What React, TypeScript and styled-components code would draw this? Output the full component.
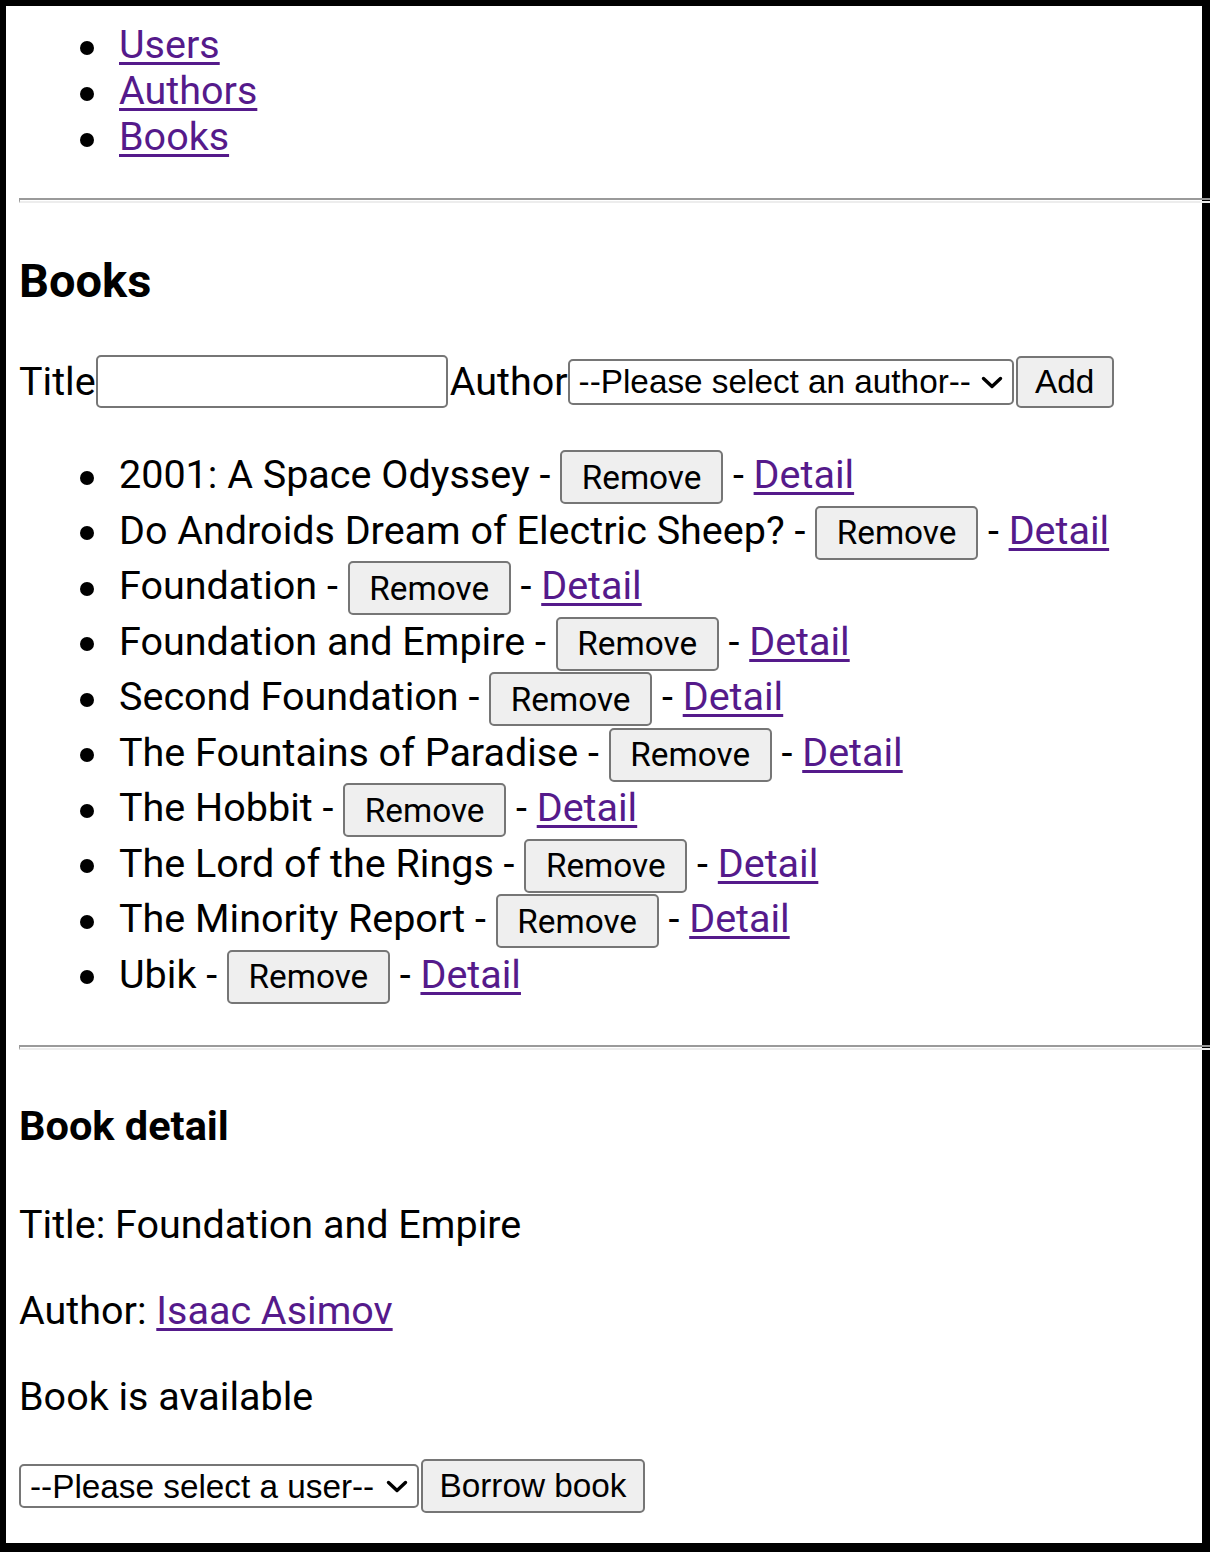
import React from 'react';
import styled, { createGlobalStyle } from 'styled-components';

// global
const GlobalStyle = createGlobalStyle`
  html, body {
    margin: 0;
    padding: 0;
    background: #000;
    overflow: hidden;
  }
  body {
    font-family: Roboto, "Liberation Sans", Arial, sans-serif;
    color: #000;
  }
`;

// styles
const Frame = styled.div`
  box-sizing: border-box;
  height: 1537px;
  margin: 6px 8px 0 6px;
  padding: 16px 0 0 13px;
  background: #fff;
  font-size: 39.5px;
`;

const List = styled.ul<{ $top: number; $line: number }>`
  margin: ${(p) => p.$top}px 0 0;
  padding-left: 100px;
  list-style: none;
  line-height: ${(p) => p.$line}px;

  & > li::before {
    content: "";
    display: inline-block;
    width: 14px;
    height: 14px;
    margin: 0 25px 0 -39px;
    border-radius: 50%;
    background: #000;
    vertical-align: middle;
  }
`;

const Link = styled.a`
  color: #551a8b;
  text-decoration: underline;
  text-underline-offset: 4px;
  text-decoration-thickness: 3px;
  cursor: pointer;
`;

const Rule = styled.hr<{ $top: number }>`
  height: 1px;
  margin: ${(p) => p.$top}px -20px 0 0;
  border: none;
  border-top: 2px solid #9a9a9a;
  border-left: 1px solid #9a9a9a;
  border-bottom: 2px solid #ededed;
`;

const PageTitle = styled.h2`
  margin: 50px 0 0;
  font-size: 47px;
  font-weight: 700;
  line-height: 55px;
`;

const FormRow = styled.div`
  display: flex;
  align-items: center;
  height: 53px;
  margin-top: 47px;
`;

const Label = styled.span`
  line-height: 46px;
`;

const TextInput = styled.input`
  box-sizing: border-box;
  width: 352px;
  height: 53px;
  margin: 0 2px 0 0;
  border: 2px solid #767676;
  border-radius: 5px;
  background: #fff;
  font-size: 33px;
`;

const SelectWrap = styled.span`
  position: relative;
  display: inline-flex;
  align-items: center;
`;

const Select = styled.select<{ $w: number; $h: number }>`
  appearance: none;
  box-sizing: border-box;
  width: ${(p) => p.$w}px;
  height: ${(p) => p.$h}px;
  margin: 0;
  padding: 0 40px 0 9px;
  border: 2px solid #767676;
  border-radius: 5px;
  background: #fff;
  color: #000;
  font-family: "Liberation Sans", Arial, sans-serif;
  font-size: 33.3px;
`;

const Chevron = styled.svg`
  position: absolute;
  right: 11px;
  top: 50%;
  margin-top: -6px;
  pointer-events: none;
`;

const Button = styled.button<{ $w: number; $h: number; $sans?: boolean }>`
  box-sizing: border-box;
  width: ${(p) => p.$w}px;
  height: ${(p) => p.$h}px;
  margin: 0 0 0 2px;
  padding: 0;
  border: 2px solid #767676;
  border-radius: 5px;
  background: #efefef;
  color: #000;
  font-family: ${(p) => (p.$sans ? '"Liberation Sans", Arial, sans-serif' : 'Roboto, sans-serif')};
  font-size: 33.3px;
  line-height: normal;
`;

const RemoveButton = styled(Button)`
  margin: 1px 0 0.5px;
  vertical-align: top;
`;

const DetailTitle = styled.h3`
  margin: 51px 0 0;
  font-size: 41.5px;
  font-weight: 700;
  line-height: 49px;
`;

const Para = styled.p<{ $top: number }>`
  margin: ${(p) => p.$top}px 0 0;
  line-height: 46px;
`;

const BorrowRow = styled.div`
  display: flex;
  align-items: center;
  margin-top: 39px;
`;

const books = [
  '2001: A Space Odyssey',
  'Do Androids Dream of Electric Sheep?',
  'Foundation',
  'Foundation and Empire',
  'Second Foundation',
  'The Fountains of Paradise',
  'The Hobbit',
  'The Lord of the Rings',
  'The Minority Report',
  'Ubik',
];

const ChevronIcon: React.FC = () => (
  <Chevron width="22" height="13" viewBox="0 0 22 13">
    <polyline points="2.5,2.5 11,10.5 19.5,2.5" fill="none" stroke="#000" strokeWidth="3.4" strokeLinecap="round" strokeLinejoin="round" />
  </Chevron>
);

const App: React.FC = () => {
  return (
    <>
      <GlobalStyle />
      <Frame>
        <List $top={0} $line={46}>
          <li><Link>Users</Link></li>
          <li><Link>Authors</Link></li>
          <li><Link>Books</Link></li>
        </List>

        <Rule $top={38} />

        <PageTitle>Books</PageTitle>
        <FormRow>
          <Label>Title</Label>
          <TextInput type="text" />
          <Label>Author</Label>
          <SelectWrap>
            <Select $w={446} $h={46} defaultValue="">
              <option value="">--Please select an author--</option>
            </Select>
            <ChevronIcon />
          </SelectWrap>
          <Button $w={98} $h={52} $sans>Add</Button>
        </FormRow>

        <List $top={41} $line={51.5}>
          {books.map((title) => (
            <li key={title}>
              {title} - <RemoveButton $w={163} $h={54}>Remove</RemoveButton> - <Link>Detail</Link>
            </li>
          ))}
        </List>

        <Rule $top={41} />

        <DetailTitle>Book detail</DetailTitle>
        <Para $top={52}>Title: Foundation and Empire</Para>
        <Para $top={40}>Author: <Link>Isaac Asimov</Link></Para>
        <Para $top={40}>Book is available</Para>

        <BorrowRow>
          <SelectWrap>
            <Select $w={400} $h={44} defaultValue="">
              <option value="">--Please select a user--</option>
            </Select>
            <ChevronIcon />
          </SelectWrap>
          <Button $w={224} $h={54} $sans>Borrow book</Button>
        </BorrowRow>
      </Frame>
    </>
  );
};

export default App;
